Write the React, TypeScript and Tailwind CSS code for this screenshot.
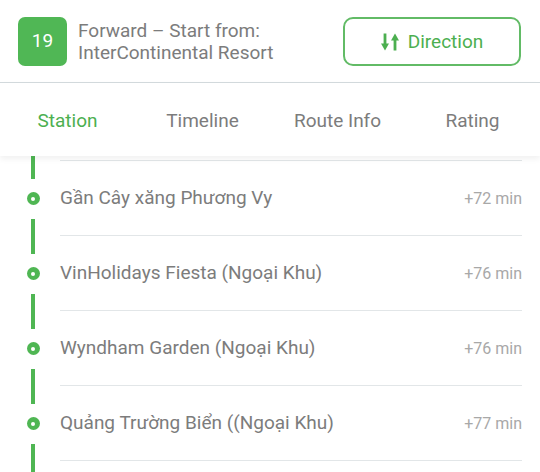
import React from "react";

const stops = [
  { name: "Gần Cây xăng Phương Vy", time: "+72 min" },
  { name: "VinHolidays Fiesta (Ngoại Khu)", time: "+76 min" },
  { name: "Wyndham Garden (Ngoại Khu)", time: "+76 min" },
  { name: "Quảng Trường Biển ((Ngoại Khu)", time: "+77 min" },
];

const tabs = ["Station", "Timeline", "Route Info", "Rating"];

// down arrow on the left, up arrow on the right
function SwapIcon() {
  return (
    <svg width="18" height="18" viewBox="0 0 18 18" fill="currentColor">
      <rect x="2.6" y="0.5" width="2.8" height="11" />
      <polygon points="0,10.5 8,10.5 4,17.5" />
      <rect x="12.6" y="6.5" width="2.8" height="11" />
      <polygon points="10,7.5 18,7.5 14,0.5" />
    </svg>
  );
}

function Line({ className }: { className: string }) {
  return <div className={"w-[4px] bg-[#4fb653] " + className} />;
}

function StopRow({ name, time }: { name: string; time: string }) {
  return (
    <div className="flex h-[75px]">
      <div className="w-[60px] pl-[26px] shrink-0">
        <div className="w-[14px] h-full flex flex-col items-center">
          <Line className="h-[18px]" />
          <div className="h-[13px]" />
          <div className="w-[13px] h-[13px] rounded-full bg-[#4fb653] flex items-center justify-center">
            <div className="w-[4px] h-[4px] rounded-full bg-white" />
          </div>
          <div className="h-[14px]" />
          <Line className="flex-1" />
        </div>
      </div>
      <div className="flex-1 mr-[18px] border-b border-[#e2e6e8] flex items-center justify-between pt-[1px]">
        <span className="text-[19px] text-[#7c7c7c]">{name}</span>
        <span className="text-[16px] text-[#a8a8a8]">{time}</span>
      </div>
    </div>
  );
}

export default function App() {
  return (
    <div className="w-[540px] h-[472px] overflow-hidden bg-white font-['Roboto',sans-serif]">
      <header className="h-[83px] border-b border-[#d3dadd] flex items-center justify-between pl-[18px] pr-[19px] pt-[1px]">
        <div className="flex items-center gap-[11px]">
          <div className="w-[49px] h-[49px] rounded-[7px] bg-[#50b755] text-white text-[19px] flex items-center justify-center">
            19
          </div>
          <div className="text-[19px] leading-[22px] text-[#7c7c7c] pt-[1px]">
            <div>Forward – Start from:</div>
            <div>InterContinental Resort</div>
          </div>
        </div>
        <button className="w-[178px] h-[49px] border-2 border-[#62bb66] rounded-[10px] flex items-center justify-center gap-[9px] text-[#4caf50] text-[19px] pt-[1px]">
          <SwapIcon />
          Direction
        </button>
      </header>

      <nav className="relative z-10 h-[73px] pt-[4px] grid grid-cols-4 items-center bg-white shadow-[0_3px_6px_rgba(0,0,0,0.06)]">
        {tabs.map((t, i) => (
          <div
            key={t}
            className={
              i === 0
                ? "text-center text-[19px] text-[#4caf50]"
                : "text-center text-[19px] text-[#7c7c7c]"
            }
          >
            {t}
          </div>
        ))}
      </nav>

      <div>
        <div className="flex h-[5px]">
          <div className="w-[60px] pl-[26px] shrink-0">
            <div className="w-[14px] h-full flex flex-col items-center">
              <Line className="h-full" />
            </div>
          </div>
          <div className="flex-1 mr-[18px] border-b border-[#e2e6e8]" />
        </div>
        {stops.map((s) => (
          <StopRow key={s.name} name={s.name} time={s.time} />
        ))}
        <div className="w-[60px] pl-[26px] h-[18px]">
          <div className="w-[14px] h-full flex flex-col items-center">
            <Line className="h-full" />
          </div>
        </div>
      </div>
    </div>
  );
}
